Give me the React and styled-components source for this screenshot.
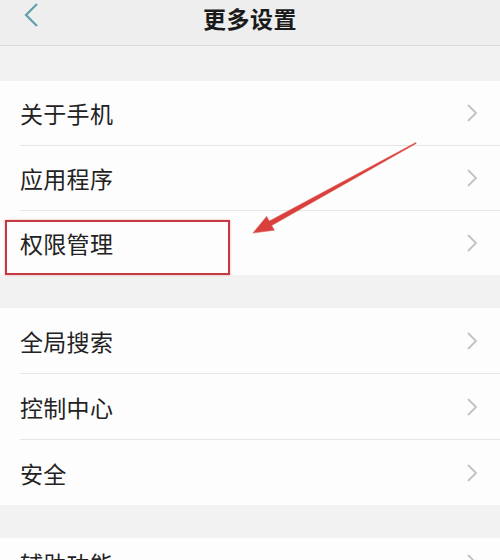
import React from "react";
import styled, { createGlobalStyle } from "styled-components";

const GlobalStyle = createGlobalStyle`
  html, body {
    margin: 0;
    padding: 0;
    background: #f2f2f2;
    font-family: "Noto Sans CJK SC", "Noto Sans", sans-serif;
  }
`;

const sections = [
  { rowHeight: 64, rows: ["关于手机", "应用程序", "权限管理"] },
  { rowHeight: 65, rows: ["全局搜索", "控制中心", "安全"] },
  { rowHeight: 50, rows: ["辅助功能"] },
];

function App() {
  return (
    <>
      <GlobalStyle />
      <Page>
        <Header>
          <Back>
            <svg width="16" height="26" viewBox="0 0 16 26">
              <path d="M14 2 L3 13 L14 24" fill="none" stroke="#5f9fae" strokeWidth="2.2" />
            </svg>
          </Back>
          <Title>更多设置</Title>
        </Header>
        {sections.map((section, i) => (
          <Section key={i}>
            {section.rows.map((label) => (
              <Row key={label} $height={section.rowHeight}>
                <Label>{label}</Label>
                <Chevron>
                  <svg width="12" height="20" viewBox="0 0 12 20">
                    <path d="M2 2 L10 10 L2 18" fill="none" stroke="#c2c2c2" strokeWidth="1.8" />
                  </svg>
                </Chevron>
                {label === "权限管理" && <Highlight />}
              </Row>
            ))}
          </Section>
        ))}
        <Arrow width="500" height="560" viewBox="0 0 500 560">
          <polygon
            points="415.8,142.6 269.3,221.1 266.6,216.4 253,233 274.4,230.2 271.7,225.5 416.2,143.4"
            fill="#d8403c"
            stroke="#e0605a"
            strokeWidth="0.6"
            strokeLinejoin="round"
          />
        </Arrow>
      </Page>
    </>
  );
}

const Page = styled.div`
  position: relative;
  width: 500px;
  height: 560px;
  overflow: hidden;
  background: #f2f2f2;
  display: flex;
  flex-direction: column;
`;

const Header = styled.div`
  flex-shrink: 0;
  height: 45px;
  background: #eeeeee;
  border-bottom: 1px solid #dcdcdc;
  display: flex;
  align-items: center;
  justify-content: center;
  position: relative;
  margin-bottom: 35px;
`;

const Back = styled.div`
  position: absolute;
  left: 23px;
  top: 2px;
`;

const Title = styled.div`
  font-size: 23px;
  font-weight: 700;
  color: #1a1a1a;
  margin-top: -10px;
  letter-spacing: 0.5px;
`;

const Section = styled.div`
  flex-shrink: 0;
  background: #fdfdfd;
  margin-bottom: 33px;
  display: flex;
  flex-direction: column;
`;

const Row = styled.div`
  position: relative;
  height: ${(p) => p.$height}px;
  display: flex;
  align-items: center;
  justify-content: space-between;
  padding: 0 20px;
  & + & {
    border-top: 1px solid #e6e6e6;
    margin-left: 20px;
    padding-left: 0;
  }
`;

const Label = styled.div`
  font-size: 23px;
  color: #222;
  letter-spacing: 0.3px;
`;

const Chevron = styled.div`
  display: flex;
  align-items: center;
  margin-right: 2px;
`;

const Highlight = styled.div`
  position: absolute;
  left: -15px;
  top: 9px;
  width: 221px;
  height: 51px;
  border: 2px solid #c53a40;
  box-shadow: 0 0 2px rgba(220, 80, 80, 0.5);
`;

const Arrow = styled.svg`
  position: absolute;
  left: 0;
  top: 0;
  pointer-events: none;
`;

export default App;
